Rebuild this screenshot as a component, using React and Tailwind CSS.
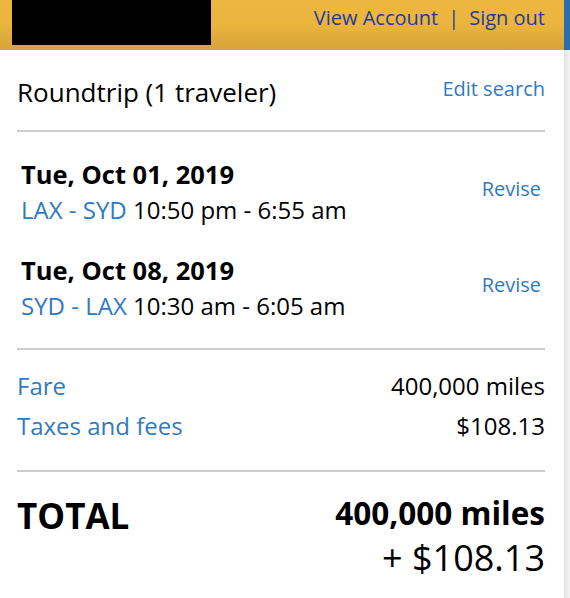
export default function App() {
  const flights = [
    { date: 'Tue, Oct 01, 2019', route: 'LAX - SYD', times: '10:50 pm - 6:55 am' },
    { date: 'Tue, Oct 08, 2019', route: 'SYD - LAX', times: '10:30 am - 6:05 am' },
  ]

  return (
    <div className="flex h-[598px] w-[570px] overflow-hidden bg-white text-black" style={{ fontFamily: '"Open Sans", "Noto Sans", sans-serif' }}>
      <div className="flex w-[564px] flex-col">
        {/* Header */}
        <div className="flex h-[50px] justify-between bg-gradient-to-b from-[#edb73f] via-[#ebb43e] to-[#d5a33a] pl-[12px] pr-[19px]">
          <div className="h-[45px] w-[199px] bg-black" />
          <div className="flex h-[36px] items-center text-[20px] text-[#1b3f99]">
            <a>View Account</a>
            <span className="px-[10px]">|</span>
            <a>Sign out</a>
          </div>
        </div>

        <div className="pl-[17px] pr-[19px]">
          {/* Trip summary */}
          <div className="flex items-start justify-between pb-[20px] pt-[24px]">
            <div className="text-[26px] leading-[36px]">Roundtrip (1 traveler)</div>
            <a className="pt-[2px] text-[20px] leading-[26px] text-[#2f7ac3]">Edit search</a>
          </div>
          <div className="h-[2px] bg-[#cccccc]" />

          {/* Flights */}
          <div className="flex flex-col gap-[24px] pb-[24px] pt-[24px]">
            {flights.map((f) => (
              <div key={f.date} className="flex items-center justify-between pl-[4px]">
                <div>
                  <div className="text-[25.5px] font-bold leading-[36px]">{f.date}</div>
                  <div className="text-[24px] leading-[36px]">
                    <span className="text-[#2f7ac3]">{f.route}</span> {f.times}
                  </div>
                </div>
                <a className="pb-[6px] pr-[4px] text-[20px] text-[#2f7ac3]">Revise</a>
              </div>
            ))}
          </div>
          <div className="h-[2px] bg-[#cccccc]" />

          {/* Fare breakdown */}
          <div className="pb-[24px] pt-[16px] text-[24px] leading-[40px]">
            <div className="flex justify-between">
              <span className="text-[#2f7ac3]">Fare</span>
              <span>400,000 miles</span>
            </div>
            <div className="flex justify-between">
              <span className="text-[#2f7ac3]">Taxes and fees</span>
              <span>$108.13</span>
            </div>
          </div>
          <div className="h-[2px] bg-[#cccccc]" />

          {/* Total */}
          <div className="flex justify-between pt-[19px]">
            <div className="text-[35px] font-bold leading-[50px]">TOTAL</div>
            <div className="text-right">
              <div className="text-[31.5px] font-bold leading-[44px]">400,000 miles</div>
              <div className="text-[36px] leading-[45px]">+ $108.13</div>
            </div>
          </div>
        </div>
      </div>

      {/* Edge of neighbouring panel */}
      <div className="flex w-[6px] flex-col">
        <div className="h-[50px] bg-[#2b6db3]" />
        <div className="flex-1 bg-gradient-to-r from-[#e4e4e4] to-[#f2f2f2]" />
      </div>
    </div>
  )
}
